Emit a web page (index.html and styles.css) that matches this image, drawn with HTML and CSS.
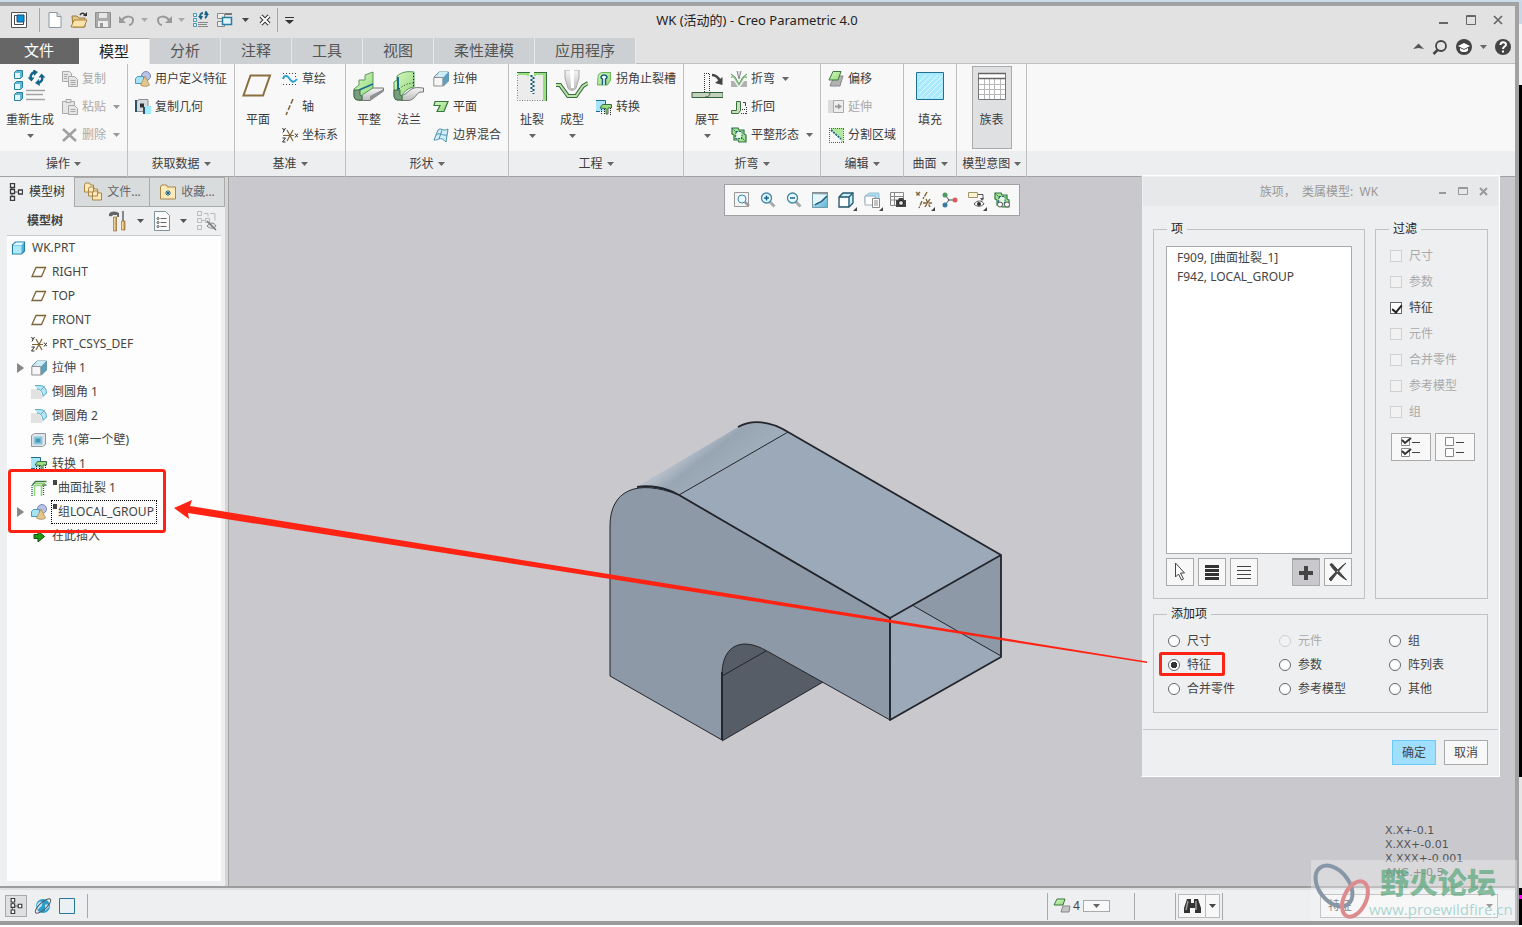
FILE: index.html
```html
<!DOCTYPE html>
<html lang="zh-CN">
<head>
<meta charset="utf-8">
<title>WK (活动的) - Creo Parametric 4.0</title>
<link rel="stylesheet" href="styles.css">
</head>
<body>
<svg class="sprite" aria-hidden="true">
  <defs>
    <linearGradient id="sky" x1="0" y1="0" x2="1" y2="1"><stop offset="0" stop-color="#dff4fb"/><stop offset="1" stop-color="#5fb2d4"/></linearGradient>
    <linearGradient id="grn" x1="0" y1="0" x2="1" y2="1"><stop offset="0" stop-color="#d8f7c4"/><stop offset="1" stop-color="#8fd877"/></linearGradient>
    <linearGradient id="gry" x1="0" y1="0" x2="0" y2="1"><stop offset="0" stop-color="#f6f6f6"/><stop offset="1" stop-color="#bcbcbc"/></linearGradient>
    <linearGradient id="gold" x1="0" y1="0" x2="1" y2="0"><stop offset="0" stop-color="#fff3c8"/><stop offset="1" stop-color="#c08a3c"/></linearGradient>
    <linearGradient id="round" gradientUnits="userSpaceOnUse" x1="687" y1="454" x2="715" y2="490"><stop offset="0" stop-color="#b4bec9"/><stop offset=".3" stop-color="#98a5b3"/><stop offset="1" stop-color="#a1aebc"/></linearGradient>
  </defs>
  <symbol id="tri" viewBox="0 0 7 4"><path d="M0 0h7L3.500 4z" fill="currentColor"/></symbol>
  <symbol id="plane16" viewBox="0 0 16 16"><path d="M5 3.500h9.500L10.500 12.500H1z" fill="none" stroke="#7d6537" stroke-width="1.300"/></symbol>
  <symbol id="plane32" viewBox="0 0 32 32"><path d="M8.500 5.500H28L21 25.500H1.500z" fill="none" stroke="#8a7040" stroke-width="2"/></symbol>
  <symbol id="csys" viewBox="0 0 16 16"><path d="M1 8.500h11M5 3l6 11M11 3L5 14" stroke="#7d6537" stroke-width="1.200"/><path d="M0.500 1l1.500 2.500L3.500 1M2 3.500L1 5.500M13 6.500l3 4M16 6.500l-3 4M.500 11h3l-3 4h3" stroke="#333" fill="none"/></symbol>
  <symbol id="udf" viewBox="0 0 16 16"><circle cx="11" cy="5" r="4.500" fill="#b8c2e4" stroke="#7886b4"/><path d="M.500 7.500l2-2h6v7h-8z" fill="#a6e3f7" stroke="#4a9cba"/><path d="M10 5l4.500 9c-1.500 1.800-7 1.800-9 0z" fill="#e2c68e" stroke="#a98d56" stroke-width=".8"/></symbol>
  <symbol id="extrude" viewBox="0 0 16 16"><path d="M1 6l5-5h9.500v9l-5 5z" fill="url(#sky)" stroke="#7090a0"/><path d="M6 1l-1 5h6l4-5z" fill="#cdeef9"/><path d="M.800 6.500h9v8.500h-9z" fill="#f6f6f6" stroke="#909090"/><path d="M10 6.500L15.500 1v9L10 15z" fill="#5c9fbf"/></symbol>
  <symbol id="round16" viewBox="0 0 16 16"><path d="M0 5h6c4 1 5 5 5 10H0z" fill="#e2e2e2"/><path d="M4 1h5c4 0 7 4 7 8l-4 4c0-4-2-8-6-8z" fill="#b6e7f7"/><path d="M4 1.500h5c4 0 6.500 3.500 6.500 7.500L12 12.500M6 5c4 0 6 4 6 7.500M9.500 6.500l4-4" fill="none" stroke="#5aaac8"/></symbol>
  <symbol id="shell" viewBox="0 0 16 16"><path d="M.500 3.500l3-2h11v11l-3 2H.500z" fill="#e1e5e8" stroke="#8b989f"/><path d="M3.500 5.500h7v6h-7z" fill="#4f94b5" stroke="#8bc9e0" stroke-width="2"/></symbol>
  <symbol id="convert" viewBox="0 0 16 16"><path d="M0 1h9v11H0z" fill="#a9e5fa"/><path d="M0 1.500h9.500V5M0 12.500h4" fill="none" stroke="#1d6c8e"/><path d="M4 9l2.500-3.500h9V9H12v6h-2V9.500z" fill="#9bdf83" stroke="#2f5c35" stroke-width=".9"/><path d="M5.500 10v6M8.500 10v6M14.500 9v7" stroke="#222" stroke-dasharray="1 1"/></symbol>
  <symbol id="rip16" viewBox="0 0 16 16"><path d="M1.500 5l3-3.500H15.500M11 5h4.500" fill="none" stroke="#3f7b43" stroke-width="1.500"/><path d="M3.500 16V5.500h7V16M4 3.500h10" fill="none" stroke="#90d477" stroke-width="1.500"/><path d="M1 5v11M12.500 6v10" stroke="#205a6b" stroke-width="1.300" stroke-dasharray="1 1"/></symbol>
  <symbol id="cube" viewBox="0 0 16 16"><path d="M1.500 5l3-3h9v9l-3 3h-9z" fill="#4fb4dc" stroke="#267da1" stroke-width="1.200"/><path d="M2 5.500h8.500v8H2z" fill="#ade8fb"/><path d="M2 5l3-2.500h8L10.500 5z" fill="#e1f8ff"/></symbol>
  <symbol id="copy" viewBox="0 0 16 16" fill="#e6e6e6" stroke="#a9a9a9"><path d="M.500.500h7l2 2v8h-9z"/><path d="M6.500 5.500h6l3 3v7h-9zM2 3.500h4M2 5.500h3M2 7.500h3M8.500 9.500h5M8.500 11.500h5M8.500 13.500h5"/></symbol>
  <symbol id="paste" viewBox="0 0 16 16" fill="#e6e6e6" stroke="#a9a9a9"><path d="M.500 2.500h12v12H.500z"/><path d="M4 .500h5v3H4zM6.500 6.500h6l3 3v6h-9zM8.500 10.500h5M8.500 12.500h5"/></symbol>
  <symbol id="cross" viewBox="0 0 16 16"><path d="M1 2l13 12M14 2L1 14" stroke="#a0a0a0" stroke-width="2.500"/></symbol>
  <symbol id="regen32" viewBox="0 0 32 32"><g fill="#5db8d8" stroke="#287f9f"><path d="M.500 2.500l2-2h6v6l-2 2h-6zM.500 13.500l2-2h6v6l-2 2h-6zM.500 24.500l2-2h6v6l-2 2h-6z"/></g><path d="M1 3h5v5H1zM1 14h5v5H1zM1 25h5v5H1z" fill="#e2f7ff"/><path d="M21 2c-4 1-5 4-4 7M24 13c4-1 5-4 4-7" fill="none" stroke="#17648a" stroke-width="2.500"/><path d="M19-1l5 3-4 4zM26 16l-5-3 4-4zM13.500 7.500h7l-3 4zM24.500 7.500h7l-4-4z" fill="#17648a"/><path d="M12 20.500h19M12 24.500h17M12 29.500h19" stroke="#a4a4a4" stroke-width="1.700"/></symbol>
  <symbol id="copygeom" viewBox="0 0 16 16"><path d="M1 2.500l3-2h9v10l-3 2H1z" fill="#d5d9db" stroke="#8a8f92"/><path d="M0 1h2v12H0zM8 8h2v7H8z" fill="#2b5368"/><path d="M5 4.500h4v4H5z" fill="#333"/><path d="M10 7h6v8h-6z" fill="#9feaff"/></symbol>
  <symbol id="sketch" viewBox="0 0 16 16"><path d="M1 2.500h14M1 13.500h14M1 5.500h2M12 10.500h3M13 5.500h2" stroke="#444" stroke-dasharray="1 2"/><path d="M1 8C2 4 5 4 7 7s4 6 8 1" fill="none" stroke="#28a2d2" stroke-width="2"/></symbol>
  <symbol id="axis" viewBox="0 0 16 16"><path d="M11 0L4 16" stroke="#7d6537" stroke-width="1.500" stroke-dasharray="5 2"/></symbol>
  <symbol id="flat32" viewBox="0 0 32 32"><path d="M6 26l12-8h12.500v3L17 30.500H6z" fill="url(#gry)" stroke="#777"/><path d="M17 26l13.500-7v2.500L17 30.500z" fill="#8f9294"/><path d="M1 19l5-4v-5h6V5l8-3v16L9 25v5H5c-3 0-4-2-4-5z" fill="url(#grn)" stroke="#5a985e"/><path d="M6 20l14-6" stroke="#176a90" stroke-width="1.500"/><path d="M1 20h6v5l2 1v4H5c-3 0-4-2-4-5z" fill="#789c7d" stroke="#426b4a"/></symbol>
  <symbol id="flange32" viewBox="0 0 32 32"><path d="M8 26c6-2 9-7 13-8 4-1 6 0 9.500 0v4c-8-1-6 6-14 8.500H8z" fill="url(#gry)" stroke="#777"/><path d="M4 6c5-4 10-5 17-4v15c-6 1-9 4-12 8v5H5c-3 0-4-2-4-5V12l3-2z" fill="url(#grn)" stroke="#55985a"/><path d="M5 7v13" stroke="#176a90" stroke-width="2"/><path d="M6 19c5-4 9-6 15-6M20.500 3v14" fill="none" stroke="#222" stroke-dasharray="1 2"/><path d="M1 20h6v5l2 1v4H5c-3 0-4-2-4-5z" fill="#789c7d" stroke="#426b4a"/></symbol>
  <symbol id="planar" viewBox="0 0 16 16"><path d="M2 2.500h13l-4 10H4l3-6H1z" fill="url(#grn)" stroke="#397640" stroke-width="1.200"/></symbol>
  <symbol id="blend" viewBox="0 0 16 16"><path d="M1 13L5 3c3-3 5 2 10-1l-2 13c-3-3-5-4-7-3s-3 1-5 1z" fill="#cfeefa" stroke="#4e91ac"/><path d="M3 8c4-3 6 1 11 0M9 3L6 12" fill="none" stroke="#4e91ac"/></symbol>
  <symbol id="rip32" viewBox="0 0 32 32"><path d="M2 5h26v25H2z" fill="#ececec"/><path d="M1.500 5v25.500H28" stroke="#777" stroke-dasharray="1 1.500" fill="none"/><path d="M2 4h10v2M19 6V4h10" fill="none" stroke="#97e17c" stroke-width="2"/><path d="M1 2.500h13M18 2.500h13" stroke="#3b6c43"/><path d="M28.500 3v28" stroke="#97e17c" stroke-width="3"/><path d="M30.500 3v28" stroke="#3b6c43"/><path d="M15.500 5v17M17.500 7v17" stroke="#176178" stroke-width="2" stroke-dasharray="2 2"/></symbol>
  <symbol id="form32" viewBox="0 0 32 32"><path d="M0 15h4l8 11h8l7-10 5-3" fill="none" stroke="#3b6c43" stroke-width="4"/><path d="M0 15h4l8 11h8l7-10 5-3" fill="none" stroke="#b7e3a4" stroke-width="2"/><path d="M9 0h14v8l-3 10c-1 3-7 3-8 0L9 8z" fill="url(#gry)" stroke="#aaa"/><path d="M14 0h4v18h-3z" fill="#fff"/></symbol>
  <symbol id="relief" viewBox="0 0 16 16"><path d="M2 6c0-3 2-4.500 5-4.500h7.500V9l-3 5H1.500z" fill="url(#grn)" stroke="#6ab45b"/><path d="M6.500 14V8C4 7 5 4 8 4s4 3 1.500 4v6" fill="#fff" stroke="#176178" stroke-width="1.500"/></symbol>
  <symbol id="unbend32" viewBox="0 0 32 32"><path d="M1 22.500h31v5H1z" fill="#c3d1bd" stroke="#335f3c"/><path d="M13.500 22V4M18.500 21V4M13 3.500h6" stroke="#333" stroke-dasharray="1 1" fill="none"/><path d="M14 27c4 0 5-2 5-5" fill="none" stroke="#335f3c"/><path d="M21 5c4 0 6 2 8 6" fill="none" stroke="#444" stroke-width="2.500"/><path d="M24 13l7.500 2V7z" fill="#444"/></symbol>
  <symbol id="bend" viewBox="0 0 16 16"><path d="M0 3l4 3 4 7 4-7 4-3" fill="none" stroke="#548957"/><path d="M0 6h3l5 8 5-8h3" fill="none" stroke="#83bd7b" stroke-width="1.300"/><path d="M6 0l2 8 2-8" fill="#ddd" stroke="#888"/><path d="M0 10h3l4 6H0zM16 10h-3l-4 6h7z" fill="#b2b2b2"/></symbol>
  <symbol id="bendback" viewBox="0 0 16 16"><path d="M.500 14.500v-3h5v-9h4v9l-2 3z" fill="#c7dfc1" stroke="#3b713f"/><path d="M10 14.500h6M15.500 8v7M11 10.500h5" stroke="#333" stroke-dasharray="1 1"/><path d="M12 3.500h2.500V7" fill="none" stroke="#444"/></symbol>
  <symbol id="flatform" viewBox="0 0 16 16"><path d="M1 1h6l1 2h5v4l2 1v7H8l-1-2H3V8L1 7z" fill="#a8e48f" stroke="#2c7540" stroke-width="1.200"/><path d="M5 5h6v6H5z" fill="#e8f8e0"/><path d="M1 1l5 5M10 10l4 4M5 4.500h6v7H4.500z" fill="none" stroke="#1c637b" stroke-dasharray="2 1"/></symbol>
  <symbol id="offset" viewBox="0 0 16 16"><path d="M3 12l4-7h8l-3 10H2z" fill="#b2b2b2" stroke="#8a8a8a"/><path d="M1 9l4-8.500h8L10 9z" fill="url(#grn)" stroke="#397640"/></symbol>
  <symbol id="extend" viewBox="0 0 16 16"><path d="M0 1h6v13H0z" fill="#dcdcdc"/><path d="M5.500 1.500h10v12h-10z" fill="#eee" stroke="#aaa"/><path d="M7 7.500h4" stroke="#999" stroke-width="2"/><path d="M10 4.500l4 3-4 3z" fill="#999"/></symbol>
  <symbol id="split" viewBox="0 0 16 16"><path d="M3 1h12v14h-2v-3L3 3z" fill="#b2e7a0"/><path d="M1 1.500h15M1.500 1v15M1 15.500h15M15.500 2v13" stroke="#3e7444" stroke-dasharray="1 1"/><path d="M3 3l10 9" stroke="#176178" stroke-width="1.700" stroke-dasharray="2 1"/></symbol>
  <symbol id="fill32" viewBox="0 0 32 32"><path d="M2.500 2.500h27v27h-27z" fill="#a9eaff" stroke="#226f91"/><path d="M5 12l7-7M5 18L18 5M5 24L24 5M6 28L28 6M11 28l17-17M17 28l11-11M23 28l5-5" stroke="#dff8ff"/></symbol>
  <symbol id="table32" viewBox="0 0 32 32"><path d="M2.500 3.500h27v26h-27z" fill="#fff" stroke="#777"/><path d="M3 14.500h26M3 19.500h26M3 24.500h26M8.500 9v20M13.500 9v20M18.500 9v20M24.500 9v20" stroke="#b8b8b8"/><path d="M2 8.500h28M2 3.500h28" stroke="#666" stroke-width="1.500"/></symbol>
  <symbol id="treeic" viewBox="0 0 14 18"><path d="M3 4v10M3 9h7" stroke="#555"/><path d="M1.500.500h4v4h-4zM1.500 6.500h4v4h-4zM1.500 13.500h4v4h-4zM9.500 7h4v4h-4z" fill="#fff" stroke="#3a3a3a" stroke-width="1.300"/></symbol>
  <symbol id="lens" viewBox="0 0 16 16"><path d="M9.500 9.500l5 5" stroke="#aaa" stroke-width="3"/><circle cx="6.500" cy="6" r="5" fill="#e8f8ff" stroke="#3d86a5" stroke-width="1.300"/></symbol>
</svg>

<div class="desktop">
  <main class="window">
    <header class="titlebar">
      <nav class="quick">
        <button aria-label="窗口"><svg width="16" height="16"><path d="M.500.500h15v15H.500z" fill="#fff" stroke="#555"/><path d="M3.500 3.500h9v9h-9z" fill="#fff" stroke="#444"/><path d="M6 3h7v7H6z" fill="#0b91d9" stroke="#1d4d74"/></svg></button>
        <i class="sep"></i>
        <button aria-label="新建"><svg width="16" height="16"><path d="M2 .500h8l4 4v11H2z" fill="#fff" stroke="#8a98a0"/><path d="M10 .500v4h4" fill="#ddd" stroke="#8a98a0"/></svg></button>
        <button aria-label="打开"><svg width="16" height="16"><path d="M1 4h5l2 2h6v9H2z" fill="#e6c582" stroke="#9c7a3f"/><path d="M0 15l3-7h13l-3 7z" fill="#fbe3a9" stroke="#a5813f"/><path d="M9 3c2-3 4-2 6 1" fill="none" stroke="#333" stroke-width="1.500"/><path d="M12 4h4V0z" fill="#333"/></svg></button>
        <button aria-label="保存"><svg width="16" height="16"><path d="M.500.500h15v15H.500z" fill="#a9a9a9" stroke="#8e8e8e"/><path d="M4 1h8v5H4z" fill="#e5e5e5"/><path d="M3 9h10v6H3z" fill="#ededed"/><path d="M5 11h3v4H5z" fill="#999"/></svg></button>
        <button aria-label="撤消"><svg width="16" height="16"><path d="M3 8c4-5 11-4 11 0 0 3-2 5-4 5" fill="none" stroke="#999" stroke-width="2"/><path d="M0 4v7h7z" fill="#999"/></svg></button>
        <button class="dim" aria-label="撤消列表"><svg width="7" height="4"><use href="#tri"/></svg></button>
        <button aria-label="重做"><svg width="16" height="16"><path d="M13 8C9 3 2 4 2 8c0 3 2 5 4 5" fill="none" stroke="#999" stroke-width="2"/><path d="M16 4v7H9z" fill="#999"/></svg></button>
        <button class="dim" aria-label="重做列表"><svg width="7" height="4"><use href="#tri"/></svg></button>
        <button aria-label="重新生成"><svg width="16" height="16"><g fill="#e2f7ff" stroke="#4a94b0"><path d="M.500 1.500h3v3h-3zM.500 6.500h3v3h-3zM.500 11.500h3v3h-3z"/></g><path d="M8 6c-2-3 0-5 2-5M12 0c3 1 2 5 0 6" fill="none" stroke="#17648a" stroke-width="2"/><path d="M5 4h5L8 8zM11 3l2-4 3 4z" fill="#17648a"/><path d="M5 10.500h10M5 12.500h9M5 14.500h10" stroke="#888"/></svg></button>
        <button class="wide" aria-label="窗口列表"><svg width="16" height="16"><path d="M.500 1.500h7v5h-7zM.500 9.500h7v5h-7z" fill="#eee" stroke="#888"/><path d="M8 1h7v2H8z" fill="#777"/><path d="M5.500 5.500h9v7h-9z" fill="#dff4fb" stroke="#2480a5" stroke-width="1.500"/></svg></button>
        <button aria-label="展开窗口列表"><svg width="7" height="4"><use href="#tri"/></svg></button>
        <button class="close" aria-label="关闭窗口"><svg width="12" height="12"><path d="M2 2l8 8M10 2l-8 8" stroke="#333" stroke-width="4"/><path d="M2 2l8 8M10 2l-8 8" stroke="#fff" stroke-width="2"/></svg></button>
        <i class="sep"></i>
        <button aria-label="自定义工具栏"><svg width="9" height="7"><path d="M0 .500h9" stroke="#333"/><path d="M0 3h9L4.500 7z" fill="#333"/></svg></button>
      </nav>
      <h1>WK (活动的) - Creo Parametric 4.0</h1>
      <div class="wincontrols">
        <button aria-label="最小化"><svg width="10" height="10"><path d="M0 8h9" stroke="#666" stroke-width="2"/></svg></button>
        <button aria-label="最大化"><svg width="10" height="10"><path d="M.500.500h9v9h-9zM0 1.500h10" fill="none" stroke="#666"/></svg></button>
        <button aria-label="关闭"><svg width="10" height="10"><path d="M1 1l8 8M9 1L1 9" stroke="#666" stroke-width="1.700"/></svg></button>
      </div>
    </header>

    <nav class="tabs">
      <button class="file">文件</button><button class="active">模型</button><button>分析</button><button>注释</button><button>工具</button><button>视图</button><button>柔性建模</button><button>应用程序</button>
      <div class="helpers">
        <button aria-label="折叠功能区"><svg width="11" height="7"><path d="M0 6l5.500-5.500L11 6l-5.500-1z" fill="#555"/></svg></button>
        <button aria-label="搜索"><svg width="16" height="16"><circle cx="9" cy="7" r="5" fill="none" stroke="#444" stroke-width="1.800"/><path d="M5.500 11L1.500 15" stroke="#444" stroke-width="2.500"/></svg></button>
        <button aria-label="学习"><svg width="16" height="16"><circle cx="8" cy="8" r="8" fill="#444"/><path d="M2 7l6-3 6 3-6 3z" fill="#fff"/><path d="M4 9v2.500c2 2 6 2 8 0V9L8 11z" fill="#fff"/></svg></button>
        <button aria-label="学习列表"><svg width="7" height="4"><use href="#tri"/></svg></button>
        <button aria-label="帮助"><svg width="16" height="16"><circle cx="8" cy="8" r="8" fill="#444"/><path d="M5.500 6c0-3.500 5.500-3.500 5.500-.5C11 7.500 8 7.500 8 10" fill="none" stroke="#fff" stroke-width="2"/><path d="M7 11.500h2v2H7z" fill="#fff"/></svg></button>
      </div>
    </nav>

    <section class="ribbon">
      <div class="group first">
        <div class="tools">
          <button class="big"><svg width="32" height="32"><use href="#regen32"/></svg><span>重新生成</span><svg width="7" height="4"><use href="#tri"/></svg></button>
          <div class="stack">
            <button class="small" disabled><svg width="16" height="16"><use href="#copy"/></svg>复制</button>
            <button class="small" disabled><svg width="16" height="16"><use href="#paste"/></svg>粘贴<svg class="arr" width="7" height="4"><use href="#tri"/></svg></button>
            <button class="small" disabled><svg width="16" height="16"><use href="#cross"/></svg>删除<svg class="arr" width="7" height="4"><use href="#tri"/></svg></button>
          </div>
        </div>
        <button class="caption">操作<svg width="7" height="4"><use href="#tri"/></svg></button>
      </div>
      <div class="group">
        <div class="tools">
          <div class="stack">
            <button class="small"><svg width="16" height="16"><use href="#udf"/></svg>用户定义特征</button>
            <button class="small"><svg width="16" height="16"><use href="#copygeom"/></svg>复制几何</button>
          </div>
        </div>
        <button class="caption">获取数据<svg width="7" height="4"><use href="#tri"/></svg></button>
      </div>
      <div class="group">
        <div class="tools">
          <button class="big"><svg width="32" height="32"><use href="#plane32"/></svg><span>平面</span></button>
          <div class="stack">
            <button class="small"><svg width="16" height="16"><use href="#sketch"/></svg>草绘</button>
            <button class="small"><svg width="16" height="16"><use href="#axis"/></svg>轴</button>
            <button class="small"><svg width="16" height="16"><use href="#csys"/></svg>坐标系</button>
          </div>
        </div>
        <button class="caption">基准<svg width="7" height="4"><use href="#tri"/></svg></button>
      </div>
      <div class="group">
        <div class="tools">
          <button class="big"><svg width="32" height="32"><use href="#flat32"/></svg><span>平整</span></button>
          <button class="big"><svg width="32" height="32"><use href="#flange32"/></svg><span>法兰</span></button>
          <div class="stack">
            <button class="small"><svg width="16" height="16"><use href="#extrude"/></svg>拉伸</button>
            <button class="small"><svg width="16" height="16"><use href="#planar"/></svg>平面</button>
            <button class="small"><svg width="16" height="16"><use href="#blend"/></svg>边界混合</button>
          </div>
        </div>
        <button class="caption">形状<svg width="7" height="4"><use href="#tri"/></svg></button>
      </div>
      <div class="group">
        <div class="tools">
          <button class="big"><svg width="32" height="32"><use href="#rip32"/></svg><span>扯裂</span><svg width="7" height="4"><use href="#tri"/></svg></button>
          <button class="big"><svg width="32" height="32"><use href="#form32"/></svg><span>成型</span><svg width="7" height="4"><use href="#tri"/></svg></button>
          <div class="stack">
            <button class="small"><svg width="16" height="16"><use href="#relief"/></svg>拐角止裂槽</button>
            <button class="small"><svg width="16" height="16"><use href="#convert"/></svg>转换</button>
          </div>
        </div>
        <button class="caption">工程<svg width="7" height="4"><use href="#tri"/></svg></button>
      </div>
      <div class="group">
        <div class="tools">
          <button class="big"><svg width="32" height="32"><use href="#unbend32"/></svg><span>展平</span><svg width="7" height="4"><use href="#tri"/></svg></button>
          <div class="stack">
            <button class="small"><svg width="16" height="16"><use href="#bend"/></svg>折弯<svg class="arr" width="7" height="4"><use href="#tri"/></svg></button>
            <button class="small"><svg width="16" height="16"><use href="#bendback"/></svg>折回</button>
            <button class="small"><svg width="16" height="16"><use href="#flatform"/></svg>平整形态<svg class="arr" width="7" height="4"><use href="#tri"/></svg></button>
          </div>
        </div>
        <button class="caption">折弯<svg width="7" height="4"><use href="#tri"/></svg></button>
      </div>
      <div class="group">
        <div class="tools">
          <div class="stack">
            <button class="small"><svg width="16" height="16"><use href="#offset"/></svg>偏移</button>
            <button class="small" disabled><svg width="16" height="16"><use href="#extend"/></svg>延伸</button>
            <button class="small"><svg width="16" height="16"><use href="#split"/></svg>分割区域</button>
          </div>
        </div>
        <button class="caption">编辑<svg width="7" height="4"><use href="#tri"/></svg></button>
      </div>
      <div class="group roomy">
        <div class="tools">
          <button class="big"><svg width="32" height="32"><use href="#fill32"/></svg><span>填充</span></button>
        </div>
        <button class="caption">曲面<svg width="7" height="4"><use href="#tri"/></svg></button>
      </div>
      <div class="group">
        <div class="tools center">
          <button class="big pressed"><svg width="32" height="32"><use href="#table32"/></svg><span>族表</span></button>
        </div>
        <button class="caption">模型意图<svg width="7" height="4"><use href="#tri"/></svg></button>
      </div>
      <div class="group rest"><div class="tools"></div><div class="caption"></div></div>
    </section>

    <section class="work">
      <aside class="side">
        <nav class="sidetabs">
          <button class="active"><svg width="14" height="18"><use href="#treeic"/></svg>模型树</button>
          <button><svg width="20" height="20"><g fill="#fdeab8" stroke="#a98549"><path d="M1.500 3l1-2h4l1 2h3v7h-9zM5.500 7l1-2h4l1 2h3v7h-9zM9.500 11l1-2h4l1 2h3v7h-9z"/></g></svg>文件...</button>
          <button><svg width="18" height="18"><path d="M1.500 4l1-2h5l1 2h8v12h-15z" fill="#fdeab8" stroke="#a98549"/><path d="M9 7v6M6 10h6M7 8l4 4M11 8l-4 4" stroke="#17648a"/></svg>收藏...</button>
        </nav>
        <div class="treehead">
          <h2>模型树</h2>
          <button aria-label="设置"><svg width="18" height="20"><path d="M0 3c2-3 6-3 10-1v4H8V4H4c-1 2-3 1-4 1z" fill="#666"/><path d="M4.500 6h3v14h-3z" fill="url(#gold)" stroke="#946c30" stroke-width=".7"/><path d="M14 0v10" stroke="#888" stroke-width="2"/><path d="M12.500 10h3.500v9h-3.500z" fill="url(#gold)" stroke="#946c30" stroke-width=".7"/></svg></button>
          <button aria-label="设置列表"><svg width="7" height="4"><use href="#tri"/></svg></button>
          <button aria-label="显示"><svg width="16" height="20"><path d="M.500.500h11l4 4v15H.500z" fill="#fafafa" stroke="#7f919b"/><path d="M6.500 7.500h6M6.500 11.500h6M6.500 15.500h6" stroke="#666"/><g fill="#fff" stroke="#555"><circle cx="4" cy="7.500" r="1"/><circle cx="4" cy="11.500" r="1"/><circle cx="4" cy="15.500" r="1"/></g></svg></button>
          <button aria-label="显示列表"><svg width="7" height="4"><use href="#tri"/></svg></button>
          <button aria-label="隐藏"><svg width="20" height="20"><g fill="#eee" stroke="#bbb"><path d="M.500.500h4v4h-4zM.500 7.500h4v4h-4zM.500 14.500h4v4h-4zM8.500 7.500h4v4h-4zM5 9.500h3M7 2.500h4v3M13 2.500h5v7"/></g><path d="M10 15c3-4 7-4 9 0-2 3-6 3-9 0z" fill="#ddd" stroke="#888"/><path d="M10 10l9 9" stroke="#777" stroke-width="1.500"/></svg></button>
        </div>
        <ul class="tree">
          <li class="root"><svg width="16" height="16"><use href="#cube"/></svg>WK.PRT</li>
          <li><i></i><svg width="16" height="16"><use href="#plane16"/></svg>RIGHT</li>
          <li><i></i><svg width="16" height="16"><use href="#plane16"/></svg>TOP</li>
          <li><i></i><svg width="16" height="16"><use href="#plane16"/></svg>FRONT</li>
          <li><i></i><svg width="16" height="16"><use href="#csys"/></svg>PRT_CSYS_DEF</li>
          <li><i class="closed"></i><svg width="16" height="16"><use href="#extrude"/></svg>拉伸 1</li>
          <li><i></i><svg width="16" height="16"><use href="#round16"/></svg>倒圆角 1</li>
          <li><i></i><svg width="16" height="16"><use href="#round16"/></svg>倒圆角 2</li>
          <li><i></i><svg width="16" height="16"><use href="#shell"/></svg>壳 1(第一个壁)</li>
          <li><i></i><svg width="16" height="16"><use href="#convert"/></svg>转换 1</li>
          <li><i></i><svg width="16" height="16"><use href="#rip16"/></svg><span class="marked">曲面扯裂 1</span></li>
          <li><i class="closed"></i><svg width="16" height="16"><use href="#udf"/></svg><span class="marked focus">组LOCAL_GROUP</span></li>
          <li><i></i><svg width="16" height="16"><path d="M3 6.500h4V3l6.500 5.500L7 14v-3.500H3z" fill="#1c9a12" stroke="#174a10"/></svg>在此插入</li>
        </ul>
      </aside>

      <div class="viewport">
        <div class="viewbar">
          <button aria-label="重新调整"><svg width="16" height="16"><path d="M.500.500h14v14H.500z" fill="#f4f4f4" stroke="#999"/><circle cx="8" cy="7" r="4" fill="#e8f8ff" stroke="#3d86a5"/><path d="M11 10l4 4" stroke="#999" stroke-width="2.500"/></svg></button>
          <button aria-label="放大"><svg width="16" height="16"><use href="#lens"/><path d="M4 6h5M6.500 3.500v5" stroke="#17648a" stroke-width="1.500"/></svg></button>
          <button aria-label="缩小"><svg width="16" height="16"><use href="#lens"/><path d="M4 6h5" stroke="#17648a" stroke-width="1.500"/></svg></button>
          <button aria-label="重画"><svg width="16" height="16"><path d="M.500.500h15v15H.500z" fill="url(#sky)" stroke="#6f99a9"/><path d="M1 3h14L7 12H1z" fill="#e4f6fc"/><path d="M3 13c3-3 5-1 9-6l3-3" fill="none" stroke="#205e7c" stroke-width="1.500"/><path d="M0 1h16" stroke="#888" stroke-width="1.500"/></svg></button>
          <button class="corner" aria-label="显示样式"><svg width="16" height="16"><path d="M1 5l4-4h10v10l-4 4H1z" fill="#c8effb" stroke="#24566c" stroke-width="1.300"/><path d="M1 5h10v10M11 5l4-4" fill="none" stroke="#24566c" stroke-width="1.300"/><path d="M2 6h8v8H2z" fill="#fff"/></svg></button>
          <button class="corner" aria-label="已保存方向"><svg width="16" height="16"><path d="M1 4l4-3h10v10H1z" fill="#a9dff2" stroke="#98c1d0"/><path d="M1 4h10v9H1z" fill="#fff" stroke="#9ab"/><path d="M8.500 6.500h7v9h-7zM10 9h4M10 11h4M10 13h4" fill="#fff" stroke="#888"/></svg></button>
          <button aria-label="视图管理器"><svg width="16" height="16"><path d="M.500.500h13v13H.500zM0 4.500h14M4.500 0v14M0 8h10" fill="#fafafa" stroke="#888"/><path d="M6 8h2l1-2h4l1 2h2v7H6z" fill="#444"/><circle cx="11" cy="11" r="2.500" fill="#ddd" stroke="#111"/></svg></button>
          <button class="corner" aria-label="基准显示"><svg width="16" height="16"><path d="M0 0l4 4M4 0L0 4M11 0L7 7M6 9l-3 7M7 11h9M10 7l4 8M14 7l-5 8" stroke="#806536" stroke-width="1.400" stroke-dasharray="5 1"/></svg></button>
          <button aria-label="旋转中心"><svg width="16" height="16"><path d="M3 3l4 5h6M7 8l-4 5" fill="none" stroke="#444"/><circle cx="3" cy="3" r="2.500" fill="#4e9a60"/><circle cx="3" cy="13" r="2.500" fill="#397ca0"/><circle cx="13" cy="8" r="2.500" fill="#d95d5d"/></svg></button>
          <button class="corner" aria-label="注释显示"><svg width="16" height="16"><path d="M.500.500h9v5h-9z" fill="#fdf4cf" stroke="#a39668"/><path d="M10 2.500h5v5" fill="none" stroke="#555"/><path d="M12 6h4l-2 3z" fill="#555"/><path d="M6 12c3-4 8-4 10 0-3 3-7 3-10 0z" fill="#fff" stroke="#555"/><circle cx="11" cy="12" r="2" fill="#333"/></svg></button>
          <button aria-label="钣金预览"><svg width="16" height="16"><use href="#flatform"/><circle cx="6" cy="12.500" r="2.500" fill="#fff" stroke="#555"/><circle cx="13" cy="12.500" r="2.500" fill="#fff" stroke="#555"/></svg></button>
        </div>

        <svg class="scene" role="img" aria-label="三维模型">
          <g transform="translate(-229 -177)" stroke-linejoin="round">
            <path d="M637 487L738 427c10-7 32-8 50 5L679 495z" fill="url(#round)"/>
            <path d="M679 495L788 432l213 123-111 63z" fill="#9ca9b8"/>
            <path d="M890 618l111-63v102l-111 63z" fill="#9ca9b8"/>
            <path d="M912 605l89-50v101z" fill="#8d99a6"/>
            <path d="M722 741V673c1-29 21-36 45-22l56 31z" fill="#575d67"/>
            <path d="M610 676V526c0-35 26-48 69-31L890 618v102L767 651c-24-14-44-7-45 22v67z" fill="#8d99a6"/>
            <path d="M722 676l44-25M679 495l109-63M912 605l89 51" fill="none" stroke="#22252b"/>
            <path d="M610 676V526c0-35 26-48 69-31L890 618v102L767 651c-24-14-44-7-45 22v67zM722 741l101-59" fill="none" stroke="#22252b"/>
            <path d="M637 487c12-2 28 0 42 8l211 123 111-63v102l-111 63V618M738 427c14-8 32-6 50 5l213 123" fill="none" stroke="#22252b" stroke-width="1.800"/>
            <path d="M722 672v68" stroke="#22252b" stroke-width="2"/>
          </g>
        </svg>

        <div class="tolerance"><p>X.X+-0.1</p><p>X.XX+-0.01</p><p>X.XXX+-0.001</p><p>ANG.+-0.5</p></div>

        <section class="dialog" role="dialog" aria-label="族项">
          <header>
            <h2>族项，&nbsp; 类属模型:&nbsp; WK</h2>
            <button aria-label="最小化"><svg width="9" height="9"><path d="M1 6h7" stroke="#999" stroke-width="2"/></svg></button>
            <button aria-label="最大化"><svg width="10" height="9"><path d="M.500.500h9v7h-9zM0 1.500h10" fill="none" stroke="#999"/></svg></button>
            <button aria-label="关闭"><svg width="9" height="9"><path d="M1 1l7 7M8 1L1 8" stroke="#999" stroke-width="2"/></svg></button>
          </header>
          <div class="panels">
            <fieldset class="items">
              <legend>项</legend>
              <ul role="listbox" aria-label="项"><li role="option">F909, [曲面扯裂_1]</li><li role="option">F942, LOCAL_GROUP</li></ul>
              <div class="itembuttons">
                <button class="box" aria-label="选择"><svg width="18" height="20"><path d="M4.500 1v14l3-3 3 6 2-1-3-6h4z" fill="#fff" stroke="#444"/></svg></button>
                <button class="box" aria-label="全选"><svg width="14" height="15"><path d="M0 1.500h14M0 5.500h14M0 9.500h14M0 13.500h14" stroke="#333" stroke-width="3"/></svg></button>
                <button class="box" aria-label="取消全选"><svg width="14" height="15"><path d="M0 1.500h14M0 5.500h14M0 9.500h14M0 13.500h14" stroke="#444"/></svg></button>
                <button class="box on push" aria-label="添加"><svg width="14" height="14"><path d="M0 7h14M7 0v14" stroke="#444" stroke-width="4"/></svg></button>
                <button class="box" aria-label="移除"><svg width="18" height="18"><path d="M1 1.500l2-1L17.500 17C12 14 5 8 1 1.500zM17 0C11 4 5 11 0 16l2 2C7 11 12 5 17 0z" fill="#444" stroke="#444"/></svg></button>
              </div>
            </fieldset>
            <fieldset class="filter">
              <legend>过滤</legend>
              <label class="off"><input type="checkbox" disabled>尺寸</label>
              <label class="off"><input type="checkbox" disabled>参数</label>
              <label><input type="checkbox" checked>特征</label>
              <label class="off"><input type="checkbox" disabled>元件</label>
              <label class="off"><input type="checkbox" disabled>合并零件</label>
              <label class="off"><input type="checkbox" disabled>参考模型</label>
              <label class="off"><input type="checkbox" disabled>组</label>
              <div class="filterbuttons">
                <button class="box" aria-label="全部选中"><svg width="20" height="20"><path d="M.500.500h8v8h-8zM.500 11.500h8v8h-8z" fill="#fff" stroke="#888"/><path d="M1 3l3 3 6-5M1 14l3 3 6-5" fill="none" stroke="#333" stroke-width="2"/><path d="M11 5.500h8M11 15.500h8" stroke="#444"/></svg></button>
                <button class="box" aria-label="全部清除"><svg width="20" height="20"><path d="M.500.500h8v8h-8zM.500 11.500h8v8h-8z" fill="#fff" stroke="#888"/><path d="M11 5.500h8M11 15.500h8" stroke="#444"/></svg></button>
              </div>
            </fieldset>
            <fieldset class="add">
              <legend>添加项</legend>
              <label><input type="radio" name="add">尺寸</label>
              <label class="off"><input type="radio" name="add" disabled>元件</label>
              <label><input type="radio" name="add">组</label>
              <label><input type="radio" name="add" checked>特征</label>
              <label><input type="radio" name="add">参数</label>
              <label><input type="radio" name="add">阵列表</label>
              <label><input type="radio" name="add">合并零件</label>
              <label><input type="radio" name="add">参考模型</label>
              <label><input type="radio" name="add">其他</label>
            </fieldset>
          </div>
          <footer><button class="box primary">确定</button><button class="box">取消</button></footer>
        </section>
      </div>
    </section>

    <footer class="status">
      <button class="chosen" aria-label="模型树"><svg width="14" height="16"><use href="#treeic"/></svg></button>
      <button aria-label="浏览器"><svg width="16" height="16"><circle cx="8" cy="8" r="7" fill="#2d9ccb"/><path d="M3 5c3-3 5-1 4 2s-3 2-4 5c-2-2-2-5 0-7zM10 7c2-2 4 0 4 2l-4 4z" fill="#bfe8f5"/><ellipse cx="8" cy="8" rx="10" ry="3.500" fill="none" stroke="#5a5a5a" transform="rotate(-42 8 8)"/></svg></button>
      <button aria-label="全屏"><svg width="16" height="16"><path d="M.500.500h15v15H.500z" fill="url(#gry)" stroke="#2a7899"/><path d="M1 1h14v14H1z" fill="#e9f1f5"/></svg></button>
      <i class="sep"></i>
      <div class="right">
        <div class="cell count">
          <svg width="16" height="16"><path d="M7 14l2-6h7l-1 6z" fill="#c4c4c4" stroke="#888"/><path d="M0 7l3-6h8L9 7z" fill="url(#grn)" stroke="#397640"/></svg>
          <span>4</span>
          <label class="drop mini"><select aria-label="数量"><option></option></select><svg width="7" height="4"><use href="#tri"/></svg></label>
        </div>
        <div class="cell gap"></div>
        <div class="cell find">
          <button aria-label="查找"><svg width="17" height="16"><path d="M3 1h4v4h3V1h4l3 9v5h-6v-5H6v5H0v-5z" fill="#333"/><path d="M4 3l-2 9M12 3v9" stroke="#999" stroke-width="1.500"/></svg></button><button aria-label="查找列表"><svg width="7" height="4"><use href="#tri"/></svg></button>
        </div>
        <label class="drop filterby"><select aria-label="选择过滤器"><option>特征</option></select><svg width="7" height="4"><use href="#tri"/></svg></label>
      </div>
    </footer>
  </main>
  <div class="edge"></div>
</div>

<svg class="marks" aria-hidden="true">
  <g fill="none" stroke="#ff2314" stroke-width="3"><rect x="9.500" y="470.500" width="155" height="61" rx="2"/><rect x="1160.500" y="653.500" width="63" height="21" rx="1"/></g>
  <path d="M174 508l18-8-2 6L1147 661.500v1.500L188 513l1 6z" fill="#ff2314"/>
</svg>

<div class="watermark">
  <svg width="58" height="58"><g fill="none"><ellipse cx="23" cy="26" rx="15" ry="23" stroke="#8797a8" stroke-width="4" transform="rotate(-38 23 26)"/><ellipse cx="44" cy="39" rx="11" ry="19" stroke="#dc8c8e" stroke-width="4" transform="rotate(26 44 39)"/></g></svg>
  <div><strong>野火论坛</strong><span>www.proewildfire.cn</span></div>
</div>
</body>
</html>
```

FILE: styles.css
```css
* { box-sizing: border-box; }
body, h1, h2, p, ul, fieldset { margin: 0; padding: 0; }
body {
  position: relative;
  font: 12px/18px "Noto Sans", "Noto Sans CJK SC", sans-serif;
  color: #444;
}
ul { list-style: none; }
svg { display: block; flex: none; overflow: visible; }
.sprite { position: absolute; width: 0; height: 0; }
button {
  display: flex; align-items: center; justify-content: center;
  margin: 0; padding: 0; border: 0; background: none;
  font: inherit; color: inherit; white-space: nowrap;
}

.desktop {
  display: flex; height: 100vh; padding: 2px 0;
  background: linear-gradient(#cbdcea 0 2px, #fff 2px);
  overflow: hidden;
}
.edge {
  flex: 0 0 3px;
  background: linear-gradient(#c7d8e8 0 22px, #f2f4f6 22px 83px, #000 83px 775px, #e6e6e6 775px 886px, #000 886px 893px, #f0f 893px 897px, #000 897px);
}
.window {
  flex: 1; min-width: 0; display: flex; flex-direction: column;
  border: 4px solid #a2a2a2; border-left: 0; border-bottom-color: #9c9c9c;
  background: #eeeff1;
}

.titlebar { display: flex; align-items: center; height: 32px; padding-bottom: 4px; background: #e2e2e2; }
.titlebar h1 { flex: 1; text-align: center; font-size: 13px; font-weight: 400; color: #222; }
.quick { display: flex; align-items: center; gap: 8px; flex: 1; padding-left: 11px; color: #444; }
.quick .wide { margin-right: 1px; }
.quick .dim { color: #aaa; margin-left: -2px; }
.quick .close { margin-left: 2px; }
.sep { width: 1px; height: 24px; background: #a8a8a8; }
.quick .sep { margin: 0 -1px 0 4px; }
.quick .close + .sep { margin: 0 -1px 0 -2px; }
.wincontrols { display: flex; flex: 1; justify-content: flex-end; gap: 17px; padding-right: 12px; }

.tabs { display: flex; height: 26px; background: #e2e2e2; border-bottom: 1px solid #c0c0c0; font-size: 15px; line-height: 22px; }
.tabs > button { padding: 0 20px 2px; margin-bottom: -1px; background: #ccd0d3; border-right: 1px solid #e8e8e8; color: #555; }
.tabs > .file { padding: 0 25px 2px 24px; background: #666; color: #fff; border: 0; }
.tabs > .active { background: #f8f8f8; color: #222; border-top: 1px solid #aaa; }
.helpers { display: flex; align-items: center; gap: 8px; margin-left: auto; padding: 0 4px 8px 0; color: #666; }

.ribbon { display: flex; color: #3c3c3c; }
.group { display: flex; flex-direction: column; background: #f8f8f8; border-right: 1px solid #bfbfc0; }
.tools { display: flex; gap: 8px; height: 87px; padding: 0 7px; }
.first .tools { padding-left: 6px; }
.tools.center { justify-content: center; }
.roomy .tools { padding: 0 10px; }
.group.rest { flex: 1; border: 0; }
.big { flex-direction: column; justify-content: flex-start; height: 83px; padding-top: 6px; }
.big span { margin: 9px 0 5px; }
.pressed { width: 40px; margin-top: 2px; padding-top: 3px; background: #dfe0e2; border: 1px solid #aaa; }
.stack { display: flex; flex-direction: column; align-items: flex-start; }
.small { height: 28px; gap: 3px; padding-top: 1px; }
.small svg:first-child { margin-right: 1px; }
.small .arr { margin-left: 4px; }
.big svg + span + svg, .small .arr, .caption svg { color: #666; }
.small:disabled { color: #aaa; }
.small:disabled .arr { color: #999; }
.caption { display: flex; gap: 4px; height: 26px; padding: 0 5px; background: #edeef0; border-bottom: 1px solid #a2a2a2; }

.work { flex: 1; min-height: 0; display: flex; }
.side { flex: 0 0 229px; display: flex; flex-direction: column; padding-bottom: 5px; border-right: 1px solid #a2a2a2; box-shadow: inset -3px 0 #d3d5d7; }
.sidetabs { display: flex; height: 30px; margin-right: 3px; }
.sidetabs button { flex: 1; gap: 4px; background: #d9dcdd; border: 1px solid #aaa; border-left: 0; color: #666; }
.sidetabs .active { background: #eeeff1; border-bottom: 0; border-top: 0; color: #333; gap: 6px; }
.treehead { display: flex; align-items: center; gap: 10px; height: 28px; padding-left: 27px; }
.treehead h2 { font-size: 12px; margin-right: 36px; }
.treehead svg { color: #555; }
.tree { flex: 1; margin: 0 7px; background: #fdfdfd; border-top: 1px solid #c8cccf; }
.tree li { display: flex; align-items: center; height: 24px; gap: 5px; padding-left: 10px; white-space: nowrap; }
.tree .root { padding-left: 4px; }
.tree i { width: 9px; height: 10px; }
.tree i.closed { background: #888; clip-path: polygon(0 0, 80% 50%, 0 100%); }
.marked { position: relative; padding: 2px 0 2px 6px; }
.marked::before { content: ""; position: absolute; left: 1px; top: 3px; width: 4px; height: 5px; background: #444; }
.focus { padding-right: 2px; outline: 1px dotted #000; }

.viewport { position: relative; flex: 1; min-width: 0; background: #c9c8cd; }
.scene { position: absolute; inset: 0; width: 100%; height: 100%; overflow: hidden; }
.viewbar {
  position: relative; display: flex; align-items: center; gap: 10px;
  width: max-content; height: 32px; margin: 7px auto 0; padding: 0 9px;
  background: #f8f8f8; border: 1px solid #a2a2a2;
}
.corner { position: relative; }
.corner::after { content: ""; position: absolute; right: -3px; bottom: -3px; border: 2px solid; border-color: transparent #444 #444 transparent; }
.tolerance { position: absolute; right: 50px; bottom: 6px; width: 80px; font: 11px/14px "DejaVu Sans", sans-serif; color: #555; }
.tolerance p { white-space: nowrap; }

.dialog {
  position: absolute; top: -2px; right: 15px; width: 359px;
  background: #eeeff1; border: 1px solid #fff; border-left-color: #c8c8cc;
}
.dialog > header { display: flex; align-items: center; gap: 11px; height: 29px; margin: 1px; padding: 0 10px; background: #e6e8e9; color: #999; }
.dialog h2 { flex: 1; padding-left: 58px; text-align: center; font-size: 12px; font-weight: 400; }
.panels { display: grid; grid-template-columns: 212px 1fr; gap: 6px 10px; padding: 13px 11px 16px; }
fieldset { min-width: 0; border: 1px solid #c0c2c4; }
legend { padding: 0 4px; color: #222; }
.items { padding: 8px 12px 12px; }
.items legend { margin-left: 1px; }
.items ul { height: 308px; padding: 2px 10px; background: #fff; border: 1px solid #aaa; }
.items li { height: 19px; }
.box { width: 28px; height: 28px; background: #f8f8f8; border: 1px solid #aaa; }
.box.on { background: #c9c8cd; border-top: 2px solid #999; }
.itembuttons { display: flex; gap: 4px; margin-top: 4px; }
.push { margin-left: auto; }
.filter { padding: 5px 10px 5px 14px; }
.filter legend { margin-left: -1px; }
.filter label { display: flex; align-items: center; gap: 7px; height: 26px; }
.off { color: #aaa; }
.filterbuttons { display: flex; gap: 4px; margin: 8px 0 0 1px; }
.filterbuttons .box { width: 40px; }
.add { grid-column: 1 / -1; display: grid; grid-template-columns: 111px 110px 1fr; padding: 6px 14px 11px; }
.add legend { margin-left: -1px; }
.add label { display: flex; align-items: center; gap: 7px; height: 24px; }
input { appearance: none; flex: none; width: 12px; height: 12px; margin: 0; background: #fff; border: 1px solid #666; }
input:disabled { background: #f2f2f2; border-color: #d0d0d0; }
input[type="radio"] { border-radius: 50%; }
input[type="radio"]:checked { background: radial-gradient(circle, #333 0 3px, #fff 3px); }
input[type="checkbox"]:checked { position: relative; }
input[type="checkbox"]:checked::after { content: ""; position: absolute; left: 3px; top: 0; width: 4px; height: 8px; border: solid #222; border-width: 0 2px 2px 0; transform: rotate(40deg); }
.dialog > footer { display: flex; justify-content: flex-end; gap: 8px; margin: 0 1px; padding: 10px 10px 11px; border-top: 1px solid #c8c9cc; }
.dialog > footer .box { width: 44px; height: 25px; }
.dialog > footer .primary { background: #a1dfff; border-color: #6bcaf8; }

.status { display: flex; align-items: center; gap: 8px; height: 35px; padding-left: 5px; border-top: 2px solid #9d9d9d; box-shadow: inset 0 2px #dfe0e2; padding-top: 3px; }
.status .chosen { width: 22px; height: 22px; background: #dfe0e2; border: 1px solid #aaa; }
.status > .sep { margin-left: 4px; }
.right { display: flex; align-items: center; margin-left: auto; padding-right: 17px; }
.cell { display: flex; align-items: center; height: 27px; border-left: 1px solid #aaa; }
.count { width: 87px; padding-left: 6px; gap: 3px; }
.gap { width: 41px; }
.find { width: 48px; padding: 0 2px; border-right: 1px solid #aaa; }
.find button { flex: 1 0 14px; height: 24px; background: #f8f8f8; border: 1px solid #bbb; }
.find button:first-child { flex-basis: 26px; border-right: 0; }
.drop { position: relative; display: flex; align-items: center; }
.drop select { appearance: none; width: 100%; height: 100%; margin: 0; padding: 0 7px; border: 1px solid #aaa; border-radius: 0; background: #f8f8f8; font: inherit; color: inherit; }
.drop svg { position: absolute; right: 5px; color: #666; }
.mini { width: 27px; height: 12px; }
.mini svg { right: 10px; }
.filterby { width: 178px; height: 24px; margin-left: 97px; }

.marks { position: absolute; left: 0; top: 0; width: 100%; height: 100%; pointer-events: none; }
.watermark {
  position: absolute; right: 5px; bottom: 6px; display: flex; width: 206px; height: 61px;
  background: rgba(245, 245, 245, .38); pointer-events: none;
}
.watermark div { display: flex; flex-direction: column; white-space: nowrap; }
.watermark strong { margin: 3px 0 0 11px; font: 900 29px/36px "Noto Sans CJK SC", sans-serif; color: rgba(85, 165, 120, .7); }
.watermark span { font: 15px/20px "Open Sans", sans-serif; color: rgba(150, 205, 200, .8); }
```
